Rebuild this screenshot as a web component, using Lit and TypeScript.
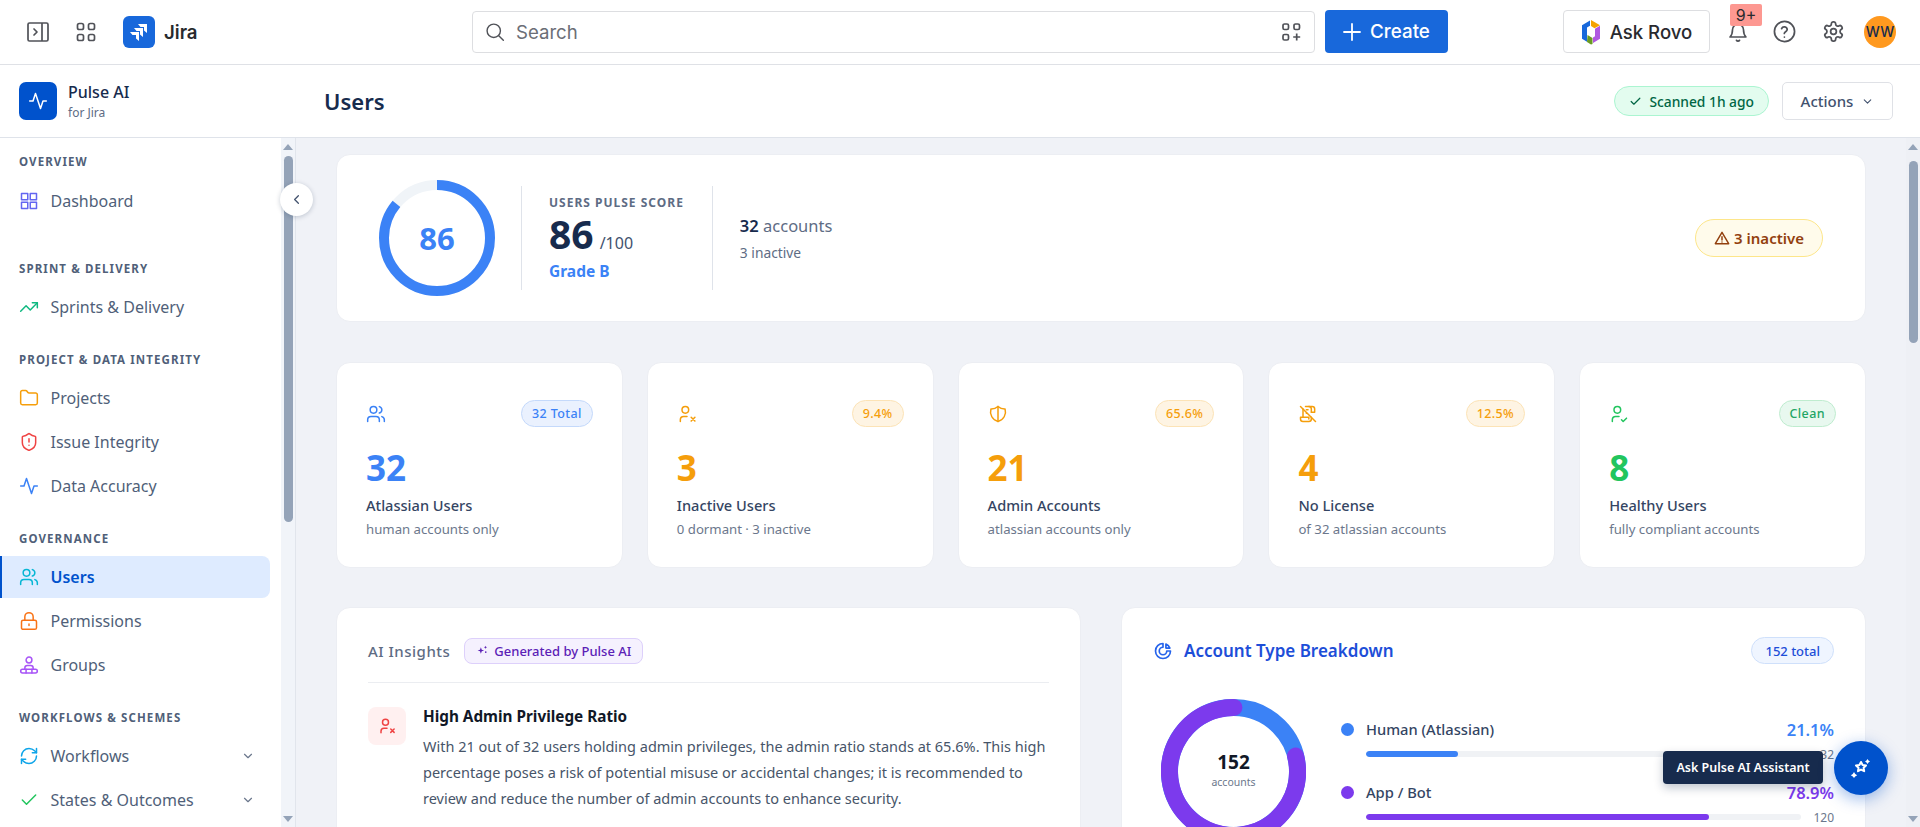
import { LitElement, html, css, svg } from 'lit';
import { customElement } from 'lit/decorators.js';

const ic = (body: unknown, size = 20, color = 'currentColor', sw = 2) => html`
  <svg width=${size} height=${size} viewBox="0 0 24 24" fill="none" stroke=${color} stroke-width=${sw}
    stroke-linecap="round" stroke-linejoin="round" style="flex:none;display:block">${body}</svg>`;

const I = {
  grid: svg`<rect x="3" y="3" width="7.5" height="7.5"/><rect x="13.5" y="3" width="7.5" height="7.5"/><rect x="3" y="13.5" width="7.5" height="7.5"/><rect x="13.5" y="13.5" width="7.5" height="7.5"/>`,
  trend: svg`<path d="M2 17l6.5-6.5 5 5L22 7"/><path d="M16 7h6v6"/>`,
  folder: svg`<path d="M20 20a2 2 0 0 0 2-2V8a2 2 0 0 0-2-2h-7.9a2 2 0 0 1-1.69-.9L9.6 3.9A2 2 0 0 0 7.93 3H4a2 2 0 0 0-2 2v13a2 2 0 0 0 2 2Z"/>`,
  shieldAlert: svg`<path d="M20 13c0 5-3.5 7.5-7.66 8.95a1 1 0 0 1-.67-.01C7.5 20.5 4 18 4 13V6a1 1 0 0 1 1-1c2 0 4.5-1.2 6.24-2.72a1.17 1.17 0 0 1 1.52 0C14.51 3.81 17 5 19 5a1 1 0 0 1 1 1z"/><path d="M12 8v4M12 16h.01"/>`,
  activity: svg`<path d="M22 12h-4l-3 9L9 3l-3 9H2"/>`,
  users: svg`<circle cx="9" cy="7" r="4"/><path d="M2 21v-2a4 4 0 0 1 4-4h6a4 4 0 0 1 4 4v2"/><path d="M16 3.13a4 4 0 0 1 0 7.75"/><path d="M22 21v-2a4 4 0 0 0-3-3.87"/>`,
  lock: svg`<rect x="3" y="11" width="18" height="11" rx="2"/><path d="M7 11V7a5 5 0 0 1 10 0v4"/><path d="M12 15.5v2"/>`,
  groups: svg`<circle cx="12" cy="6" r="3.5"/><path d="M7 17v-1.5a3 3 0 0 1 3-3h4a3 3 0 0 1 3 3V17"/><rect x="2" y="17" width="20" height="4.5" rx="2.2"/><path d="M8.5 17v4.5M15.5 17v4.5"/>`,
  refresh: svg`<path d="M3 12a9 9 0 0 1 9-9 9.75 9.75 0 0 1 6.74 2.74L21 8"/><path d="M21 3v5h-5"/><path d="M21 12a9 9 0 0 1-9 9 9.75 9.75 0 0 1-6.74-2.74L3 16"/><path d="M8 16H3v5"/>`,
  check: svg`<path d="M20 6 9 17l-5-5"/>`,
  chevDown: svg`<path d="m6 9 6 6 6-6"/>`,
  chevLeft: svg`<path d="m15 18-6-6 6-6"/>`,
  userX: svg`<circle cx="10" cy="7" r="4"/><path d="M4 21v-2a4 4 0 0 1 4-4h4"/><path d="m17 16 4.5 4.5M21.5 16 17 20.5"/>`,
  userCheck: svg`<circle cx="10" cy="7" r="4"/><path d="M4 21v-2a4 4 0 0 1 4-4h4"/><path d="m15 19 2 2 4-4"/>`,
  shieldHalf: svg`<path d="M12 3a12 12 0 0 0 8.5 3A12 12 0 0 1 12 21 12 12 0 0 1 3.5 6 12 12 0 0 0 12 3"/><path d="M12 3v18"/>`,
  licenseOff: svg`<path d="M3 3l18 18"/><path d="M9 3h8a3 3 0 0 1 3 3v4h-4"/><path d="M16 10V6a3 3 0 0 0-3-3"/><path d="M6 6v10"/><path d="M16 16v2a3 3 0 0 1-3 3H6a3 3 0 0 1-3-3v-2h10v2"/><path d="M10 7h2M10 11h.5"/>`,
  donut: svg`<path d="M12 3a9 9 0 1 0 9 9h-4.5A4.5 4.5 0 1 1 12 7.5z"/><path d="M15.5 3.7A9 9 0 0 1 20.3 8.5h-4.8z"/>`,
  sparkle: svg`<path d="M9 6l1.6 4.4L15 12l-4.4 1.6L9 18l-1.6-4.4L3 12l4.4-1.6z" fill="currentColor"/><path d="M17.5 3l.8 2.2 2.2.8-2.2.8-.8 2.2-.8-2.2L14.500 6l2.200-.8z" fill="currentColor"/><circle cx="18" cy="15" r="1.500" fill="currentColor"/>`,
  warn: svg`<path d="M12 3.500 2 20.500h20z"/><path d="M12 10v5M12 18h.01"/>`,
};

interface NavItem { label: string; icon: unknown; color: string; active?: boolean; chevron?: boolean }
interface NavGroup { title: string; items: NavItem[]; extra?: boolean }

const NAV: NavGroup[] = [
  { title: 'OVERVIEW', extra: true, items: [{ label: 'Dashboard', icon: I.grid, color: '#6366f1' }] },
  { title: 'SPRINT & DELIVERY', items: [{ label: 'Sprints & Delivery', icon: I.trend, color: '#10b981' }] },
  {
    title: 'PROJECT & DATA INTEGRITY',
    items: [
      { label: 'Projects', icon: I.folder, color: '#f59e0b' },
      { label: 'Issue Integrity', icon: I.shieldAlert, color: '#ef4444' },
      { label: 'Data Accuracy', icon: I.activity, color: '#3b82f6' },
    ],
  },
  {
    title: 'GOVERNANCE',
    items: [
      { label: 'Users', icon: I.users, color: '#06b6d4', active: true },
      { label: 'Permissions', icon: I.lock, color: '#f97316' },
      { label: 'Groups', icon: I.groups, color: '#a855f7' },
    ],
  },
  {
    title: 'WORKFLOWS & SCHEMES',
    items: [
      { label: 'Workflows', icon: I.refresh, color: '#0ea5e9', chevron: true },
      { label: 'States & Outcomes', icon: I.check, color: '#22c55e', chevron: true },
    ],
  },
];

const STATS = [
  { icon: I.users, value: '32', label: 'Atlassian Users', sub: 'human accounts only', badge: '32 Total', tone: 'blue' },
  { icon: I.userX, value: '3', label: 'Inactive Users', sub: '0 dormant · 3 inactive', badge: '9.4%', tone: 'amber' },
  { icon: I.shieldHalf, value: '21', label: 'Admin Accounts', sub: 'atlassian accounts only', badge: '65.6%', tone: 'amber' },
  { icon: I.licenseOff, value: '4', label: 'No License', sub: 'of 32 atlassian accounts', badge: '12.5%', tone: 'amber' },
  { icon: I.userCheck, value: '8', label: 'Healthy Users', sub: 'fully compliant accounts', badge: 'Clean', tone: 'green' },
];

const LEGEND = [
  { label: 'Human (Atlassian)', pct: 21.1, count: 32, color: '#3b82f6' },
  { label: 'App / Bot', pct: 78.9, count: 120, color: '#7c3aed' },
];

@customElement('app-root')
export class AppRoot extends LitElement {
  static styles = css`
    :host {
      display: flex;
      flex-direction: column;
      position: relative;
      width: 1920px;
      height: 827px;
      overflow: hidden;
      background: #fff;
      font-family: 'Noto Sans', 'Open Sans', sans-serif;
      color: #172b4d;
    }
    .topbar {
      flex: none;
      height: 65px;
      padding-bottom: 1px;
      box-sizing: border-box;
      display: flex;
      align-items: center;
      border-bottom: 1px solid #dfe1e6;
      font-family: Inter, sans-serif;
    }
    .top-left {
      width: 472px;
      padding-left: 27px;
      box-sizing: border-box;
      display: flex;
      align-items: center;
      color: #505258;
    }
    .top-left .apps { margin-left: 27px; }
    .jira-logo {
      width: 32px;
      height: 32px;
      margin-left: 27px;
      border-radius: 6px;
      background: #1868db;
      display: flex;
      align-items: center;
      justify-content: center;
    }
    .jira-name { margin-left: 9px; font-size: 18.6px; font-weight: 600; color: #292a2e; }
    .search {
      width: 843px;
      height: 42px;
      box-sizing: border-box;
      border: 1px solid #dddee1;
      border-radius: 4px;
      display: flex;
      align-items: center;
      padding: 0 13px 0 12px;
      color: #505258;
    }
    .search span { margin-left: 11px; font-size: 18.6px; color: #6b6e76; flex: 1; }
    .create {
      margin-left: 10px;
      width: 123px;
      height: 43px;
      border-radius: 4px;
      background: #1868db;
      color: #fff;
      display: flex;
      align-items: center;
      justify-content: center;
      gap: 9px;
      font-size: 18.8px;
      font-weight: 500;
    }
    .rovo {
      margin-left: 115px;
      width: 147px;
      height: 43px;
      box-sizing: border-box;
      border: 1px solid #dddee1;
      border-radius: 4px;
      display: flex;
      align-items: center;
      justify-content: center;
      gap: 9px;
      font-size: 18.6px;
      font-weight: 500;
      color: #292a2e;
    }
    .top-icons {
      position: relative;
      display: flex;
      align-items: center;
      color: #505258;
      margin-left: 17px;
    }
    .top-icons .help { margin-left: 24px; }
    .top-icons .gear { margin-left: 26px; }
    .avatar {
      margin-left: 19px;
      width: 32px;
      height: 32px;
      border-radius: 50%;
      background: #ff991f;
      color: #172b4d;
      font-size: 14px;
      font-weight: 500;
      display: flex;
      align-items: center;
      justify-content: center;
    }
    .notif {
      position: absolute;
      left: 3px;
      top: -12px;
      width: 32px;
      height: 22px;
      border-radius: 2px;
      background: #fd9891;
      color: #292a2e;
      font-size: 16px;
      display: flex;
      align-items: center;
      justify-content: center;
    }
    .subbar {
      flex: none;
      height: 73px;
      display: flex;
      align-items: center;
      border-bottom: 1px solid #dfe3ea;
      box-sizing: border-box;
      padding-right: 27px;
    }
    .brand { width: 324px; padding-left: 19px; box-sizing: border-box; display: flex; align-items: center; gap: 11px; }
    .brand-logo {
      width: 38px;
      height: 38px;
      border-radius: 7px;
      background: #0052cc;
      color: #fff;
      display: flex;
      align-items: center;
      justify-content: center;
    }
    .brand-name { font-size: 16px; font-weight: 500; line-height: 20px; color: #172b4d; }
    .brand-sub { font-size: 12px; line-height: 16px; color: #5e6c84; margin-top: 3px; }
    .page-title { flex: 1; font-size: 22px; font-weight: 600; color: #172b4d; }
    .scanned {
      height: 30px;
      box-sizing: border-box;
      padding: 0 14px;
      border: 1px solid #abf5d1;
      border-radius: 15px;
      background: #e3fcef;
      color: #006644;
      font-size: 13.8px;
      font-weight: 500;
      display: flex;
      align-items: center;
      gap: 7px;
    }
    .actions {
      margin-left: 13px;
      width: 111px;
      height: 38px;
      box-sizing: border-box;
      border: 1px solid #dfe1e6;
      border-radius: 5px;
      font-size: 15px;
      font-weight: 500;
      color: #42526e;
      display: flex;
      align-items: center;
      justify-content: center;
      gap: 8px;
    }
    .body { flex: 1; min-height: 0; display: flex; }
    .sidebar {
      flex: none;
      width: 296px;
      display: flex;
      border-right: 1px solid #e1e5ec;
      box-sizing: border-box;
      overflow: hidden;
    }
    .nav { flex: 1; padding-top: 16px; overflow: hidden; }
    .group { padding-bottom: 22px; }
    .group.extra { padding-bottom: 37px; }
    .group-title {
      height: 16px;
      line-height: 16px;
      padding-left: 19px;
      margin-bottom: 9px;
      font-size: 11.5px;
      font-weight: 700;
      letter-spacing: 1.1px;
      color: #505f79;
      white-space: nowrap;
    }
    .group.extra .group-title { margin-bottom: 10px; }
    .item {
      height: 42px;
      margin: 0 11px 2px 0;
      padding: 0 15px 0 19px;
      box-sizing: border-box;
      display: flex;
      align-items: center;
      gap: 11.5px;
      border-left: 2px solid transparent;
      margin-left: -2px;
      border-radius: 0 8px 8px 0;
      font-size: 16px;
      color: #505f79;
      white-space: nowrap;
    }
    .item .label { flex: 1; }
    .item.active {
      margin-left: 0;
      padding-left: 17px;
      background: #deebff;
      border-left-color: #0052cc;
      color: #0052cc;
      font-weight: 600;
    }
    .item .chev { color: #6b778c; }
    .track {
      flex: none;
      width: 14px;
      position: relative;
      background: #f1f4f9;
    }
    .track.main-track { background: #eef0f5; }
    .thumb {
      position: absolute;
      left: 3px;
      width: 9px;
      border-radius: 5px;
      background: #94a3b8;
    }
    .arrow {
      position: absolute;
      left: 2px;
      width: 0;
      height: 0;
      border-left: 5px solid transparent;
      border-right: 5px solid transparent;
    }
    .arrow.up { top: 6px; border-bottom: 6px solid #94a3b8; }
    .arrow.down { bottom: 5px; border-top: 6px solid #94a3b8; }
    .collapse {
      position: absolute;
      left: 280px;
      top: 183px;
      width: 33px;
      height: 33px;
      border-radius: 50%;
      background: #fff;
      box-shadow: 0 1px 5px rgba(9, 30, 66, 0.22);
      color: #42526e;
      display: flex;
      align-items: center;
      justify-content: center;
    }
    .main {
      flex: 1;
      min-width: 0;
      overflow: hidden;
      background: #f0f2f7;
      padding: 16px 40px 0;
      display: flex;
      flex-direction: column;
      gap: 39px;
    }
    .card {
      background: #fff;
      border: 1px solid #eceef3;
      border-radius: 14px;
      box-sizing: border-box;
    }
    .hero {
      flex: none;
      height: 168px;
      display: flex;
      align-items: center;
      padding: 0 42px 0 42px;
    }
    .ring { position: relative; width: 116px; height: 116px; flex: none; margin-right: 26px; }
    .ring-value {
      position: absolute;
      inset: 0;
      display: flex;
      align-items: center;
      justify-content: center;
      font-size: 31px;
      font-weight: 700;
      color: #3b82f6;
    }
    .rule { width: 1px; height: 104px; background: #dfe3ea; flex: none; }
    .score { padding: 0 28px 0 27px; }
    .score-title { font-size: 12px; font-weight: 700; letter-spacing: 1px; color: #5e6c84; line-height: 16px; }
    .score-line { display: flex; align-items: baseline; gap: 6px; line-height: 42px; margin-top: 2px; }
    .score-num { font-size: 39px; font-weight: 700; color: #172b4d; }
    .score-of { font-size: 16px; color: #42526e; }
    .grade { font-size: 15.5px; font-weight: 700; color: #3b82f6; line-height: 20px; margin-top: -3.5px; }
    .accounts { padding-left: 27px; flex: 1; }
    .accounts-top { font-size: 16.5px; color: #5e6c84; line-height: 22px; }
    .accounts-top b { font-weight: 600; color: #172b4d; }
    .accounts-sub { font-size: 13.8px; color: #5e6c84; line-height: 18px; margin-top: 7px; }
    .inactive {
      height: 38px;
      box-sizing: border-box;
      padding: 0 18px;
      border: 1px solid #fde68a;
      border-radius: 19px;
      background: #fffbeb;
      color: #92400e;
      font-size: 15px;
      font-weight: 600;
      display: flex;
      align-items: center;
      gap: 4px;
    }
    .stats { flex: none; display: grid; grid-template-columns: repeat(5, 1fr); gap: 24px; margin-top: 1px; }
    .stat { height: 206px; padding: 37px 29px 0; }
    .stat-top { display: flex; align-items: center; justify-content: space-between; height: 27px; }
    .pill {
      height: 27px;
      box-sizing: border-box;
      padding: 0 10px;
      border-radius: 14px;
      border: 1px solid;
      font-size: 12.5px;
      font-weight: 500;
      display: flex;
      align-items: center;
      letter-spacing: 0.4px;
    }
    .pill.blue { color: #3b82f6; background: #eaf1fe; border-color: #c4d9fb; }
    .pill.amber { color: #f59e0b; background: #fef4e3; border-color: #fce3b6; }
    .pill.green { color: #22a565; background: #e8f8ef; border-color: #bfeccf; }
    .stat-value { margin-top: 18px; font-size: 35px; font-weight: 700; line-height: 46px; }
    .tone-blue { color: #3b82f6; }
    .tone-amber { color: #f59e0b; }
    .tone-green { color: #22c55e; }
    .stat-label { margin-top: 4px; font-size: 14.6px; font-weight: 500; color: #344563; line-height: 20px; }
    .stat-sub { margin-top: 5px; font-size: 13.2px; color: #6b778c; line-height: 18px; }
    .lower { flex: none; display: grid; grid-template-columns: 1fr 1fr; gap: 40px; }
    .panel { height: 400px; padding: 29px 31px 0 31px; }
    .panel-head { display: flex; align-items: center; gap: 14px; height: 27px; padding-bottom: 18px; border-bottom: 1px solid #ebedf1; }
    .panel-title { font-size: 15px; font-weight: 500; color: #5e6c84; letter-spacing: 0.5px; }
    .ai-pill {
      height: 26px;
      box-sizing: border-box;
      padding: 0 11px;
      border: 1px solid #ddd0fb;
      border-radius: 8px;
      background: #f5f1fe;
      color: #5b21b6;
      font-size: 13px;
      font-weight: 500;
      display: flex;
      align-items: center;
      gap: 5px;
    }
    .insight { display: flex; gap: 17px; margin-top: 24px; }
    .insight-icon {
      width: 38px;
      height: 38px;
      flex: none;
      border-radius: 8px;
      background: #fff0f0;
      display: flex;
      align-items: center;
      justify-content: center;
    }
    .insight-title { font-size: 15.3px; font-weight: 700; color: #111827; line-height: 20px; margin-top: -1px; }
    .insight-text { font-size: 14.5px; color: #475569; line-height: 26px; margin-top: 7px; }
    .break-head { display: flex; align-items: center; height: 27px; }
    .break-title { margin-left: 11px; flex: 1; font-size: 17px; font-weight: 600; color: #1d4ed8; }
    .total-pill {
      height: 27px;
      box-sizing: border-box;
      padding: 0 13px;
      border: 1px solid #cfe0fb;
      border-radius: 14px;
      background: #eff5ff;
      color: #1d4ed8;
      font-size: 13px;
      font-weight: 500;
      display: flex;
      align-items: center;
    }
    .break-body { display: flex; margin-top: 35px; padding-left: 8px; }
    .donut { position: relative; width: 145px; height: 145px; flex: none; }
    .donut-center {
      position: absolute;
      inset: 0;
      display: flex;
      flex-direction: column;
      align-items: center;
      justify-content: center;
    }
    .donut-num { font-size: 19px; font-weight: 700; color: #111827; line-height: 26px; margin-top: -5px; }
    .donut-cap { font-size: 10.500px; color: #6b778c; line-height: 14px; }
    .legend { flex: 1; margin-left: 35px; padding-top: 19px; display: flex; flex-direction: column; gap: 18px; }
    .leg-top { display: flex; align-items: center; height: 22px; }
    .dot { width: 13px; height: 13px; border-radius: 50%; flex: none; }
    .leg-label { margin-left: 12px; flex: 1; font-size: 14.7px; font-weight: 500; color: #344563; }
    .leg-pct { font-size: 16.5px; font-weight: 600; }
    .leg-bar { display: flex; align-items: center; margin: 5px 0 0 25px; gap: 11px; height: 18px; }
    .bar { flex: 1; height: 6px; border-radius: 3px; background: #f0f2f5; overflow: hidden; }
    .bar i { display: block; height: 100%; border-radius: 3px; }
    .leg-count { width: 22px; text-align: right; font-size: 12px; color: #6b778c; }
    .fab {
      position: absolute;
      left: 1834px;
      top: 741px;
      width: 54px;
      height: 54px;
      border-radius: 50%;
      background: #0052cc;
      color: #fff;
      box-shadow: 0 4px 16px rgba(0, 82, 204, 0.4);
      display: flex;
      align-items: center;
      justify-content: center;
    }
    .tip {
      position: absolute;
      left: 1663px;
      top: 751px;
      width: 160px;
      height: 33px;
      border-radius: 4px;
      background: #172b4d;
      color: #fff;
      font-size: 12.5px;
      font-weight: 600;
      box-shadow: 0 4px 10px rgba(9, 30, 66, 0.25);
      display: flex;
      align-items: center;
      justify-content: center;
    }
  `;

  private renderTopbar() {
    return html`
      <header class="topbar">
        <div class="top-left">
          <svg width="22" height="20" viewBox="0 0 22 20" fill="none" stroke="currentColor" stroke-width="1.700">
            <rect x="1" y="1" width="20" height="18" rx="1.500"/><path d="M15 1v18"/><path d="m7 7 3 3-3 3" stroke-linecap="round" stroke-linejoin="round"/>
          </svg>
          <svg class="apps" width="20" height="20" viewBox="0 0 20 20" fill="none" stroke="currentColor" stroke-width="1.700">
            <rect x="1.500" y="1.500" width="6" height="6" rx="1.800"/><rect x="12.500" y="1.500" width="6" height="6" rx="1.800"/><rect x="1.500" y="12.500" width="6" height="6" rx="1.800"/><rect x="12.500" y="12.500" width="6" height="6" rx="1.800"/>
          </svg>
          <div class="jira-logo">
            <svg width="22" height="22" viewBox="0 0 22 22" fill="#fff">
              <path d="M10 3h9v9l-3-2.500V6h-3.500z"/><path d="M6 7h9v9l-3-2.500V10H8.500z"/><path d="M2 11h9v9l-3-2.500V14H4.500z"/>
            </svg>
          </div>
          <span class="jira-name">Jira</span>
        </div>
        <div class="search">
          ${ic(svg`<circle cx="10.500" cy="10.500" r="8"/><path d="m16.500 16.500 5.500 5.500"/>`, 20, 'currentColor', 1.7)}
          <span>Search</span>
          <svg width="19" height="20" viewBox="0 0 19 20" fill="none" stroke="currentColor" stroke-width="1.700">
            <rect x="1" y="2" width="5.500" height="5.500" rx="1.500"/><rect x="12" y="2" width="5.500" height="5.500" rx="1.500"/><rect x="1" y="12.500" width="5.500" height="5.500" rx="1.500"/><path d="M14.700 11.500v7M11.200 15h7"/>
          </svg>
        </div>
        <div class="create">
          <svg width="18" height="18" viewBox="0 0 18 18" stroke="#fff" stroke-width="1.800" stroke-linecap="round"><path d="M9 1v16M1 9h16"/></svg>
          Create
        </div>
        <div class="rovo">
          <svg width="20" height="26" viewBox="0 0 20 25">
            <path d="M9 1 1 5.700v13.600l5 3V8l3-1.800z" fill="#1868db"/>
            <path d="M10 .5l9 5.200-5.500 3L10 6.500z" fill="#f5a300"/>
            <path d="M19 6.300v13l-7 4.100v-5.500l2-1.200V9.200z" fill="#af59e1"/>
            <path d="M6.500 15.500l5 3v6l-1.500.5-4-2.400z" fill="#6a9a23"/>
          </svg>
          Ask Rovo
        </div>
        <div class="top-icons">
          ${ic(svg`<path d="M10.300 21a1.940 1.940 0 0 0 3.400 0"/><path d="M3.300 17.500h17.400c-1.700-1.800-2.700-3.500-2.700-8a6 6 0 0 0-12 0c0 4.500-1 6.200-2.700 8Z"/>`, 22, 'currentColor', 1.8)}
          <div class="notif">9+</div>
          <span class="help">${ic(svg`<circle cx="12" cy="12" r="10.500"/><path d="M9 9a3 3 0 0 1 5.800 1c0 2-3 2.500-3 4"/><path d="M11.900 17.800h.01"/>`, 23, 'currentColor', 1.8)}</span>
          <span class="gear">${ic(svg`<path d="M12.220 2h-.44a2 2 0 0 0-2 2v.18a2 2 0 0 1-1 1.730l-.43.250a2 2 0 0 1-2 0l-.15-.080a2 2 0 0 0-2.730.730l-.22.380a2 2 0 0 0 .73 2.730l.15.100a2 2 0 0 1 1 1.720v.510a2 2 0 0 1-1 1.740l-.15.090a2 2 0 0 0-.73 2.730l.22.380a2 2 0 0 0 2.730.730l.15-.080a2 2 0 0 1 2 0l.43.250a2 2 0 0 1 1 1.730V20a2 2 0 0 0 2 2h.44a2 2 0 0 0 2-2v-.18a2 2 0 0 1 1-1.730l.43-.250a2 2 0 0 1 2 0l.15.080a2 2 0 0 0 2.730-.730l.22-.390a2 2 0 0 0-.73-2.730l-.15-.080a2 2 0 0 1-1-1.740v-.500a2 2 0 0 1 1-1.740l.15-.090a2 2 0 0 0 .73-2.730l-.22-.380a2 2 0 0 0-2.730-.730l-.15.080a2 2 0 0 1-2 0l-.43-.250a2 2 0 0 1-1-1.730V4a2 2 0 0 0-2-2z"/><circle cx="12" cy="12" r="3"/>`, 23, 'currentColor', 1.8)}</span>
          <div class="avatar">WW</div>
        </div>
      </header>`;
  }

  private renderSubbar() {
    return html`
      <div class="subbar">
        <div class="brand">
          <div class="brand-logo">${ic(I.activity, 20, '#fff', 1.8)}</div>
          <div>
            <div class="brand-name">Pulse AI</div>
            <div class="brand-sub">for Jira</div>
          </div>
        </div>
        <div class="page-title">Users</div>
        <div class="scanned">${ic(I.check, 13, '#006644', 2.2)} Scanned 1h ago</div>
        <div class="actions">Actions ${ic(I.chevDown, 13, '#42526e', 2)}</div>
      </div>`;
  }

  private renderSidebar() {
    return html`
      <aside class="sidebar">
        <nav class="nav">
          ${NAV.map(
            (g) => html`
              <div class="group ${g.extra ? 'extra' : ''}">
                <div class="group-title">${g.title}</div>
                ${g.items.map(
                  (it) => html`
                    <div class="item ${it.active ? 'active' : ''}">
                      ${ic(it.icon, 20, it.color, 1.8)}
                      <span class="label">${it.label}</span>
                      ${it.chevron ? html`<span class="chev">${ic(I.chevDown, 14, 'currentColor', 2)}</span>` : ''}
                    </div>`
                )}
              </div>`
          )}
        </nav>
        <div class="track">
          <div class="arrow up"></div>
          <div class="thumb" style="top:18px;height:366px"></div>
          <div class="arrow down"></div>
        </div>
      </aside>`;
  }

  private renderHero() {
    const r = 53;
    const c = 2 * Math.PI * r;
    return html`
      <section class="card hero">
        <div class="ring">
          <svg width="116" height="116" viewBox="0 0 116 116">
            <circle cx="58" cy="58" r=${r} fill="none" stroke="#f0f4f8" stroke-width="10"/>
            <circle cx="58" cy="58" r=${r} fill="none" stroke="#3b82f6" stroke-width="10"
              stroke-dasharray="${c * 0.86} ${c}" transform="rotate(-90 58 58)"/>
          </svg>
          <div class="ring-value">86</div>
        </div>
        <div class="rule"></div>
        <div class="score">
          <div class="score-title">USERS PULSE SCORE</div>
          <div class="score-line"><span class="score-num">86</span><span class="score-of">/100</span></div>
          <div class="grade">Grade B</div>
        </div>
        <div class="rule"></div>
        <div class="accounts">
          <div class="accounts-top"><b>32</b> accounts</div>
          <div class="accounts-sub">3 inactive</div>
        </div>
        <div class="inactive">${ic(I.warn, 16, '#92400e', 2.2)} 3 inactive</div>
      </section>`;
  }

  private renderStats() {
    return html`
      <section class="stats">
        ${STATS.map(
          (s) => html`
            <div class="card stat">
              <div class="stat-top tone-${s.tone}">
                ${ic(s.icon, 20, 'currentColor', 1.8)}
                <span class="pill ${s.tone}">${s.badge}</span>
              </div>
              <div class="stat-value tone-${s.tone}">${s.value}</div>
              <div class="stat-label">${s.label}</div>
              <div class="stat-sub">${s.sub}</div>
            </div>`
        )}
      </section>`;
  }

  private renderLower() {
    const r = 64;
    const c = 2 * Math.PI * r;
    return html`
      <section class="lower">
        <div class="card panel">
          <div class="panel-head">
            <span class="panel-title">AI Insights</span>
            <span class="ai-pill">${ic(I.sparkle, 13, '#5b21b6', 0)} Generated by Pulse AI</span>
          </div>
          <div class="insight">
            <div class="insight-icon">${ic(I.userX, 18, '#ef4444', 2)}</div>
            <div>
              <div class="insight-title">High Admin Privilege Ratio</div>
              <div class="insight-text">With 21 out of 32 users holding admin privileges, the admin ratio stands at 65.6%. This high percentage poses a risk of potential misuse or accidental changes; it is recommended to review and reduce the number of admin accounts to enhance security.</div>
            </div>
          </div>
        </div>
        <div class="card panel">
          <div class="break-head">
            ${ic(I.donut, 20, '#2563eb', 2)}
            <span class="break-title">Account Type Breakdown</span>
            <span class="total-pill">152 total</span>
          </div>
          <div class="break-body">
            <div class="donut">
              <svg width="145" height="145" viewBox="0 0 145 145">
                <circle cx="72.500" cy="72.500" r=${r} fill="none" stroke="#3b82f6" stroke-width="17"/>
                <circle cx="72.500" cy="72.500" r=${r} fill="none" stroke="#7c3aed" stroke-width="17" stroke-linecap="round"
                  stroke-dasharray="${c * 0.789} ${c}" transform="rotate(${-90 + 0.211 * 360} 72.500 72.500)"/>
              </svg>
              <div class="donut-center">
                <div class="donut-num">152</div>
                <div class="donut-cap">accounts</div>
              </div>
            </div>
            <div class="legend">
              ${LEGEND.map(
                (l) => html`
                  <div>
                    <div class="leg-top">
                      <span class="dot" style="background:${l.color}"></span>
                      <span class="leg-label">${l.label}</span>
                      <span class="leg-pct" style="color:${l.color}">${l.pct}%</span>
                    </div>
                    <div class="leg-bar">
                      <div class="bar"><i style="width:${l.pct}%;background:${l.color}"></i></div>
                      <span class="leg-count">${l.count}</span>
                    </div>
                  </div>`
              )}
            </div>
          </div>
        </div>
      </section>`;
  }

  render() {
    return html`
      ${this.renderTopbar()}
      ${this.renderSubbar()}
      <div class="body">
        ${this.renderSidebar()}
        <main class="main">
          ${this.renderHero()}
          ${this.renderStats()}
          ${this.renderLower()}
        </main>
        <div class="track main-track">
          <div class="arrow up"></div>
          <div class="thumb" style="top:23px;height:182px"></div>
          <div class="arrow down"></div>
        </div>
      </div>
      <div class="collapse">${ic(I.chevLeft, 15, 'currentColor', 2)}</div>
      <div class="tip">Ask Pulse AI Assistant</div>
      <div class="fab">
        <svg width="24" height="24" viewBox="0 0 24 24" fill="none" stroke="#fff" stroke-width="2" stroke-linejoin="round">
          <path d="M12 6l1.600 3 3.400.5-2.400 2.300.6 3.400-3.200-1.600-3 1.600.5-3.400L7 9.500l3.400-.5z"/>
          <path d="M18.500 3l1 1.500 1.500 1-1.500 1-1 1.500-1-1.500L16 5.500l1.500-1z" fill="#fff" stroke="none"/>
          <path d="M5 16l1.200 2 2 1.200-2 1.200L5 22l-1.200-1.600-2-1.200 2-1.200z" fill="#fff" stroke="none"/>
        </svg>
      </div>`;
  }
}
